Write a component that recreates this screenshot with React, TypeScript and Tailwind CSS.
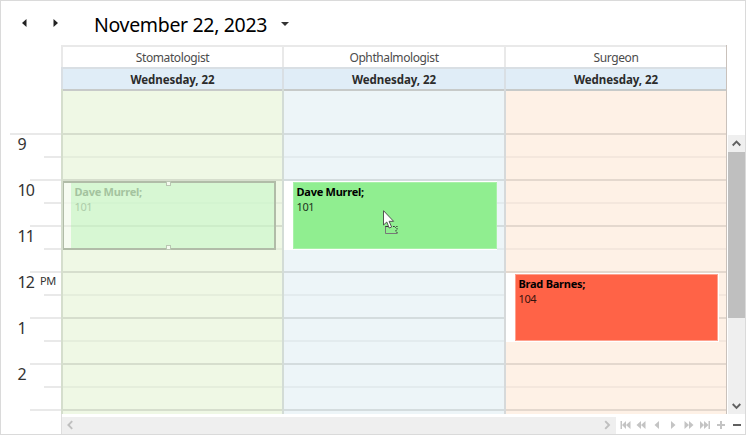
import React from "react";
import clsx from "clsx";

const resources = [
  { name: "Stomatologist", bg: "bg-[#eff8e5]", line: "border-[#d5decd]" },
  { name: "Ophthalmologist", bg: "bg-[#edf5f8]", line: "border-[#d3dcd6]" },
  { name: "Surgeon", bg: "bg-[#fef1e6]", line: "border-[#d6d9da]" },
];

const hours = ["9", "10", "11", "12", "1", "2"];

const slots = Array.from({ length: 13 }, (_, i) => i);

const TimeRuler = () => (
  <div className="w-[60px] shrink-0 pt-[88px] overflow-hidden text-[#333]">
    {hours.map((hour, i) => (
      <div key={hour} className="h-[46px]">
        <div className="relative h-[23px]">
          <div
            className={clsx(
              "h-0.5 bg-[#e9e9e9]",
              i === 0 ? "ml-[9px]" : "ml-[29px]"
            )}
          />
          <span className="absolute left-[16.5px] top-px text-[16px] leading-[21px] tracking-[-0.8px]">
            {hour}
          </span>
          {hour === "12" && (
            <span className="absolute left-[39px] top-0.5 text-[11px] leading-[16px] tracking-[-0.3px]">
              PM
            </span>
          )}
        </div>
        <div className="ml-[43px] h-0.5 bg-[#e9e9e9]" />
      </div>
    ))}
    <div className="ml-[29px] h-0.5 bg-[#e9e9e9]" />
  </div>
);

const Appointment = ({ title, room, className }: any) => (
  <div
    className={clsx(
      "border pl-[2.5px] pt-px text-[11px] leading-[15px] text-black",
      className
    )}
  >
    <p className="font-bold tracking-[-0.25px]">{title}</p>
    <p className="tracking-[-0.4px] opacity-80">{room}</p>
  </div>
);

const Handle = ({ className }: { className: string }) => (
  <span
    className={clsx(
      "absolute left-[102px] size-[5px] border border-[#bac7b3] bg-[#f4faee]",
      className
    )}
  />
);

const ResourceColumn = ({ resource, children }: any) => (
  <div className="flex flex-col">
    <div className="h-[22px] border-t-2 border-l-2 border-[#e9e9e9] text-center text-[12px] leading-[21px] tracking-[-0.4px] text-[#4c4c4c]">
      {resource.name}
    </div>
    <div className="h-[22px] border-t-2 border-l-2 border-[#d9dfe4] bg-[#e0edf7] text-center text-[11.5px] font-bold leading-[21px] tracking-[-0.05px] text-[#2b2b2b]">
      Wednesday, 22
    </div>
    <div
      className={clsx(
        "relative h-[325px] overflow-hidden border-l-2",
        resource.bg,
        resource.line
      )}
    >
      <div className="h-[44px] border-t-2 border-[#c7cac9]" />
      {slots.map((slot) => (
        <div
          key={slot}
          className={clsx(
            "h-[23px] border-t-2",
            slot % 2 === 0 ? "border-black/10" : "border-black/4"
          )}
        />
      ))}
      {children}
    </div>
  </div>
);

const Chevron = ({ d, className = "text-[#606060]" }: any) => (
  <svg width="17" height="17" viewBox="0 0 17 17" className={className}>
    <path d={d} fill="none" stroke="currentColor" strokeWidth="1.9" />
  </svg>
);

const navIcons = [
  "M0.5 1h1.5v8h-1.5z M6 1v8l-4-4z M10.5 1v8l-4.5-4z",
  "M5 1v8l-4.5-4z M9.5 1v8l-4.5-4z",
  "M7 1v8l-4.5-4z",
  "M3 1v8l4.5-4z",
  "M0.5 1v8l4.5-4z M5 1v8l4.5-4z",
  "M0 1v8l4-4z M4 1v8l4.5-4z M8.5 1h1.5v8h-1.5z",
  "M4 1h2v3h3v2h-3v3h-2v-3h-3v-2h3z",
];

const Navigator = () => (
  <div className="flex items-center pl-px">
    {navIcons.map((d) => (
      <span key={d} className="flex w-4 justify-center">
        <svg width="10" height="10" viewBox="0 0 10 10" className="overflow-visible">
          <path d={d} fill="#c4c4c4" />
        </svg>
      </span>
    ))}
    <span className="flex w-4 justify-center">
      <span className="h-0.5 w-2 bg-[#606060]" />
    </span>
  </div>
);

const Cursor = () => (
  <svg
    width="16"
    height="26"
    viewBox="0 0 16 26"
    className="absolute left-[99px] top-[121px]"
  >
    <path
      d="M2.5 16v7.500h12"
      fill="none"
      stroke="#777"
    />
    <path
      d="M2.5 16.500h3M10 16.500h1.500l1 1 1-1h1M14 18v1.500M13 20v1.500M14 22v1"
      fill="none"
      stroke="#333"
    />
    <path
      d="M0.5 0.700v14.300l3.300-3 2.400 6 2.400-1-2.500-5.700h4.500z"
      fill="#fff"
      stroke="#444"
      strokeWidth="0.9"
    />
  </svg>
);

const App = () => {
  return (
    <div className="flex h-[435px] w-[746px] flex-col overflow-hidden border border-[#dadada] bg-white font-['Noto_Sans','Open_Sans',sans-serif]">
      <div className="flex h-[44px] items-center text-black">
        <svg width="5" height="8" viewBox="0 0 5 8" className="ml-[21px]">
          <path d="M4.500 0v8l-4.500-4z" fill="#222" />
        </svg>
        <svg width="5" height="8" viewBox="0 0 5 8" className="ml-[26px]">
          <path d="M0.500 0v8l4.500-4z" fill="#222" />
        </svg>
        <h1 className="ml-[36px] w-[174px] whitespace-nowrap pt-[3px] text-[19.5px] leading-[28px] tracking-[-0.33px]">
          November 22, 2023
        </h1>
        <svg width="8" height="4" viewBox="0 0 8 4" className="ml-[13px] mt-0.5">
          <path d="M0 0h8l-4 4z" fill="#333" />
        </svg>
      </div>

      <div className="flex h-[369px]">
        <TimeRuler />
        <div className="grid w-[666px] shrink-0 grid-cols-[221px_222px_222px] border-r border-[#c9c1bb]">
          <ResourceColumn resource={resources[0]}>
            <div className="absolute -left-px top-[92px] h-[69px] w-[214px] border-2 border-[#b1bca8] bg-white/45 pl-[7px]">
              <Appointment
                title="Dave Murrel;"
                room="101"
                className="h-full border-transparent bg-[#90ee90]/30 pt-0! text-[#a4c39f]!"
              />
              <Handle className="-top-0.5" />
              <Handle className="-bottom-0.5" />
            </div>
          </ResourceColumn>
          <ResourceColumn resource={resources[1]}>
            <div className="absolute left-0 top-[92px] h-[69px] w-[213px] bg-white pl-[9px] pt-px">
              <Appointment
                title="Dave Murrel;"
                room="101"
                className="h-[67px] border-[#a8f1a8] bg-[#90ee90]"
              />
            </div>
            <Cursor />
          </ResourceColumn>
          <ResourceColumn resource={resources[2]}>
            <div className="absolute left-0 top-[184px] h-[69px] w-[213px] bg-white pl-[9px] pt-px pr-px">
              <Appointment
                title="Brad Barnes;"
                room="104"
                className="h-[67px] border-[#ffa18e] bg-[#ff6347]"
              />
            </div>
          </ResourceColumn>
        </div>
        <div className="ml-px mt-[90px] flex w-[17px] flex-col bg-[#efefef]">
          <Chevron d="M4.700 10.500l3.800-3.800 3.800 3.800" />
          <div className="h-[166px] bg-[#bfbfbf]" />
          <Chevron
            d="M4.700 7l3.800 3.800 3.800-3.800"
            className="mt-auto text-[#606060]"
          />
        </div>
      </div>

      <div className="flex h-[20px] pl-[60px]">
        <div className="flex flex-1 items-center border-l border-[#dedede] pt-0.5">
          <div className="flex h-[17px] w-[554px] justify-between bg-[#efefef]">
            <Chevron d="M10.200 4.200l-3.800 3.800 3.800 3.800" className="text-[#bfbfbf]" />
            <Chevron d="M6.200 4.200l3.800 3.800-3.800 3.800" className="text-[#bfbfbf]" />
          </div>
          <Navigator />
        </div>
      </div>
    </div>
  );
};

export default App;
